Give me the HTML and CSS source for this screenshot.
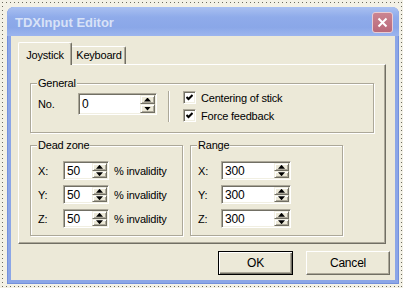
FILE: index.html
```html
<!DOCTYPE html>
<html lang="en">

<head>
    <meta charset="UTF-8">
    <meta name="viewport" content="width=device-width, initial-scale=1.0">
    <title>TDXInput Editor</title>
    <link rel="stylesheet" href="styles.css">
</head>

<body>
    <div id="desk">
        <div id="win">
            <div id="titlebar">
                <span class="title">TDXInput Editor</span>
                <div class="close">
                    <svg width="11" height="11" viewBox="0 0 11 11">
                        <path d="M1.5 1.5 L9.5 9.5 M9.5 1.5 L1.5 9.5" stroke="#fff" stroke-width="2" />
                    </svg>
                </div>
            </div>
            <div id="client">
                <div class="tabs">
                    <div class="tab on">Joystick</div>
                    <div class="tab">Keyboard</div>
                </div>
                <div class="panel">
                    <fieldset class="grp general">
                        <legend>General</legend>
                        <div class="row">
                            <span class="lbl no">No.</span>
                            <div class="spin w79 tall">
                                <span class="val">0</span>
                                <span class="arrows"><i class="arr"><b class="up"></b></i><i class="arr"><b class="dn"></b></i></span>
                            </div>
                            <div class="sep"></div>
                            <div class="checks">
                                <div class="chk">
                                    <span class="box"><svg width="7" height="7" viewBox="0 0 7 7"><path d="M0.5 3 L2.5 5 L6.5 1" stroke="#000" stroke-width="2" fill="none" /></svg></span>
                                    Centering of stick
                                </div>
                                <div class="chk">
                                    <span class="box"><svg width="7" height="7" viewBox="0 0 7 7"><path d="M0.5 3 L2.5 5 L6.5 1" stroke="#000" stroke-width="2" fill="none" /></svg></span>
                                    Force feedback
                                </div>
                            </div>
                        </div>
                    </fieldset>
                    <div class="pair">
                        <fieldset class="grp half">
                            <legend>Dead zone</legend>
                            <div class="line">
                                <span class="lbl dz">X:</span>
                                <div class="spin w46"><span class="val">50</span><span class="arrows"><i class="arr"><b class="up"></b></i><i class="arr"><b class="dn"></b></i></span></div>
                                <span class="unit">% invalidity</span>
                            </div>
                            <div class="line">
                                <span class="lbl dz">Y:</span>
                                <div class="spin w46"><span class="val">50</span><span class="arrows"><i class="arr"><b class="up"></b></i><i class="arr"><b class="dn"></b></i></span></div>
                                <span class="unit">% invalidity</span>
                            </div>
                            <div class="line">
                                <span class="lbl dz">Z:</span>
                                <div class="spin w46"><span class="val">50</span><span class="arrows"><i class="arr"><b class="up"></b></i><i class="arr"><b class="dn"></b></i></span></div>
                                <span class="unit">% invalidity</span>
                            </div>
                        </fieldset>
                        <fieldset class="grp half">
                            <legend>Range</legend>
                            <div class="line">
                                <span class="lbl rg">X:</span>
                                <div class="spin w70"><span class="val">300</span><span class="arrows"><i class="arr"><b class="up"></b></i><i class="arr"><b class="dn"></b></i></span></div>
                            </div>
                            <div class="line">
                                <span class="lbl rg">Y:</span>
                                <div class="spin w70"><span class="val">300</span><span class="arrows"><i class="arr"><b class="up"></b></i><i class="arr"><b class="dn"></b></i></span></div>
                            </div>
                            <div class="line">
                                <span class="lbl rg">Z:</span>
                                <div class="spin w70"><span class="val">300</span><span class="arrows"><i class="arr"><b class="up"></b></i><i class="arr"><b class="dn"></b></i></span></div>
                            </div>
                        </fieldset>
                    </div>
                </div>
                <div class="buttons">
                    <div class="btn def">OK</div>
                    <div class="btn cancel">Cancel</div>
                </div>
            </div>
        </div>
    </div>
</body>

</html>
```

FILE: styles.css
```css
* {
    margin: 0;
    padding: 0;
    box-sizing: border-box;
}

html,
body {
    width: 403px;
    height: 288px;
    overflow: hidden;
    background: #f3f1e6;
}

body {
    padding: 2px;
    font-family: "Liberation Sans", Arial, sans-serif;
    font-size: 11px;
    letter-spacing: -0.2px;
    color: #000;
}

/* dotted selection frame round the dialog */
#desk {
    width: 400px;
    height: 285px;
    padding: 5px;
    background:
        linear-gradient(to right, #6c6b5e 1px, transparent 1px) top left / 4px 1px repeat-x,
        linear-gradient(to right, #6c6b5e 1px, transparent 1px) bottom left / 4px 1px repeat-x,
        linear-gradient(#6c6b5e 1px, transparent 1px) top left / 1px 4px repeat-y,
        linear-gradient(#6c6b5e 1px, transparent 1px) top right / 1px 4px repeat-y;
}

#win {
    width: 392px;
    height: 277px;
    display: flex;
    flex-direction: column;
    background: #8ba6e7;
    border-radius: 7px 7px 0 0;
    box-shadow: inset 1px 0 #7390dc, inset -1px -1px #7390dc;
}

#titlebar {
    height: 29px;
    flex: none;
    display: flex;
    align-items: center;
    justify-content: space-between;
    padding: 2px 6px 0 8px;
    border-radius: 7px 7px 0 0;
    background: linear-gradient(#a9c0f1, #8fabea 35%, #8aa7e8 70%, #9cb5ee);
}

.title {
    font-size: 13px;
    font-weight: bold;
    letter-spacing: 0;
    color: #d8e2f7;
}

.close {
    width: 21px;
    height: 21px;
    display: flex;
    align-items: center;
    justify-content: center;
    border: 1px solid #e9ccd2;
    border-radius: 3px;
    background: linear-gradient(#cb8591, #b9697a);
}

#client {
    flex: 1;
    margin: 0 4px 4px;
    padding: 6px 5px 0 7px;
    background: #ece9d8;
}

/* tabs */
.tabs {
    height: 22px;
    display: flex;
    align-items: flex-end;
}

.tab {
    width: 54px;
    height: 18px;
    line-height: 17px;
    text-align: center;
    background: #ece9d8;
    border-top: 1px solid #fff;
    border-right: 1px solid #716f64;
    border-radius: 0 2px 0 0;
    box-shadow: inset -1px 0 #aca899;
    padding-left: 1px;
}

.tab.on {
    height: 23px;
    line-height: 24px;
    margin-bottom: -1px;
    position: relative;
    z-index: 1;
    border-left: 1px solid #fff;
    border-radius: 2px 2px 0 0;
    padding-left: 0;
}

.panel {
    width: 368px;
    height: 180px;
    padding: 12px 0 0 11px;
    border: 1px solid;
    border-color: #fff #716f64 #716f64 #fff;
    box-shadow: inset -1px -1px #aca899;
}

/* group boxes */
.grp {
    border: 1px solid #aca899;
    box-shadow: inset 1px 1px #fff, 1px 1px #fff;
    padding: 0 6px;
    min-width: 0;
}

.grp legend {
    padding: 0 1px;
    line-height: 12px;
    background: #ece9d8;
}

.general {
    width: 344px;
    height: 56px;
}

.row {
    display: flex;
    align-items: flex-start;
    padding: 2px 0 0 1px;
}

.lbl.no {
    width: 40px;
    line-height: 22px;
    margin-top: 2px;
}

.sep {
    width: 2px;
    height: 31px;
    margin-left: 11px;
    border-left: 1px solid #aca899;
    border-right: 1px solid #fff;
}

.checks {
    margin-left: 13px;
}

.chk {
    height: 13px;
    margin-bottom: 5px;
    display: flex;
    align-items: center;
    gap: 5px;
}

.box {
    width: 13px;
    height: 13px;
    display: flex;
    align-items: center;
    justify-content: center;
    background: #fff;
    border: 1px solid;
    border-color: #aca899 #fff #fff #aca899;
    box-shadow: inset 1px 1px #716f64, inset -1px -1px #f1efe2;
}

.pair {
    display: flex;
    gap: 7px;
    margin-top: 6px;
}

.half {
    width: 153px;
    height: 97px;
    padding-top: 10px;
}

.line {
    display: flex;
    align-items: center;
    height: 19px;
    margin-bottom: 5px;
    padding-left: 1px;
}

.lbl.dz {
    width: 25px;
}

.lbl.rg {
    width: 23px;
}

.unit {
    margin-left: 5px;
}

/* spin boxes */
.spin {
    height: 19px;
    display: flex;
    padding: 1px;
    background: #fff;
    border: 1px solid;
    border-color: #aca899 #fff #fff #aca899;
    box-shadow: inset 1px 1px #716f64, inset -1px -1px #f1efe2;
}

.spin.tall {
    height: 22px;
    margin-top: 2px;
}

.w79 {
    width: 79px;
}

.w46 {
    width: 46px;
}

.w70 {
    width: 70px;
}

.val {
    flex: 1;
    padding-left: 2px;
    display: flex;
    align-items: center;
    font-size: 12px;
}

.arrows {
    width: 15px;
    display: flex;
    flex-direction: column;
}

.arr {
    flex: 1;
    display: flex;
    align-items: center;
    justify-content: center;
    background: #ece9d8;
    border: 1px solid;
    border-color: #f1efe2 #716f64 #716f64 #f1efe2;
    box-shadow: inset 1px 1px #fff, inset -1px -1px #aca899;
}

.up,
.dn {
    width: 7px;
    height: 4px;
    background: #000;
}

.up {
    clip-path: polygon(50% 0, 100% 100%, 0 100%);
}

.dn {
    clip-path: polygon(0 0, 100% 0, 50% 100%);
}

/* dialog buttons */
.buttons {
    display: flex;
    justify-content: flex-end;
    gap: 13px;
    margin-top: 7px;
}

.btn {
    height: 24px;
    display: flex;
    align-items: center;
    justify-content: center;
    font-size: 12px;
    background: #ece9d8;
    border: 1px solid;
    border-color: #fff #716f64 #716f64 #fff;
    box-shadow: inset -1px -1px #aca899;
}

.btn.def {
    width: 75px;
    border: 1px solid #000;
    box-shadow: inset 1px 1px #fff, inset -1px -1px #716f64, inset -2px -2px #aca899;
}

.btn.cancel {
    width: 84px;
}
```
